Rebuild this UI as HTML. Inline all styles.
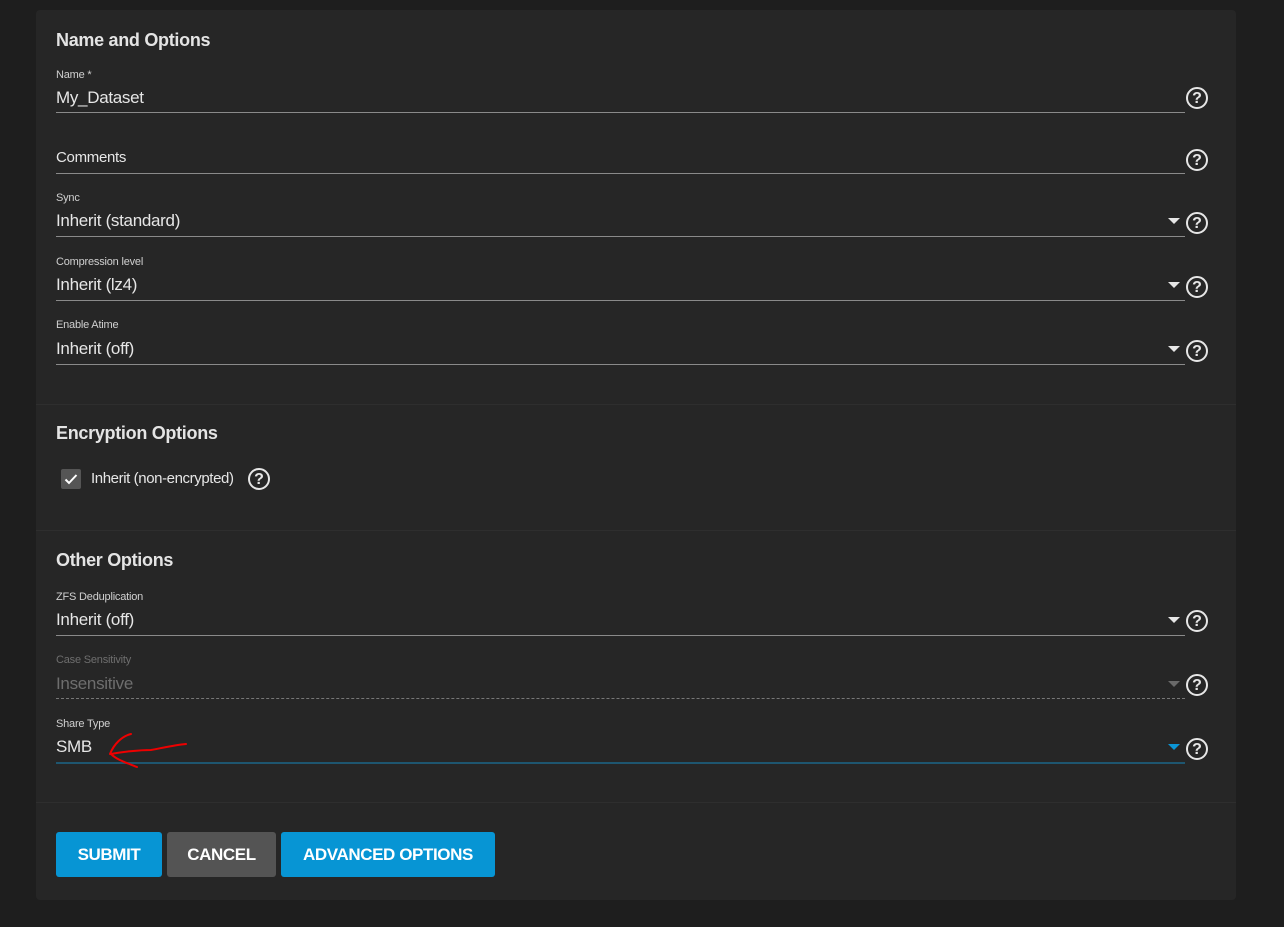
<!DOCTYPE html>
<html><head><meta charset="utf-8"><style>
*{margin:0;padding:0;box-sizing:border-box}
body{width:1284px;height:927px;background:#1e1e1e;font-family:"Liberation Sans",sans-serif;position:relative;overflow:hidden;color:#e6e6e6}
.card{position:absolute;left:36px;top:10px;width:1200px;height:890px;background:#262626;border-radius:4px}
.a{position:absolute}
h2{position:absolute;left:56px;font-size:18px;font-weight:bold;color:#e4e4e4;letter-spacing:-0.3px}
.lbl{position:absolute;left:56px;font-size:11px;color:#d0d0d0;letter-spacing:-0.2px}
.val{position:absolute;left:56px;font-size:17px;color:#e6e6e6;letter-spacing:-0.3px}
.line{position:absolute;left:56px;width:1129px;height:1px;background:#8a8a8a}
.div{position:absolute;left:36px;width:1200px;height:1px;background:#2e2e2e}
.help{position:absolute;width:22px;height:22px;border:2px solid #e6e6e6;border-radius:50%;font-size:16px;font-weight:bold;text-align:center;line-height:19px;color:#e6e6e6}
.arr{position:absolute;left:1168px;width:0;height:0;border-left:6px solid transparent;border-right:6px solid transparent;border-top:6px solid #e6e6e6}
.btn{position:absolute;top:832px;height:45px;border-radius:3px;color:#fff;font-weight:bold;font-size:17px;text-align:center;line-height:45px;letter-spacing:-0.4px}
</style></head><body>
<div class="card"></div>
<h2 style="top:30px">Name and Options</h2>
<div class="lbl" style="top:69px">Name *</div>
<div class="val" style="top:88px">My_Dataset</div>
<div class="line" style="top:112px"></div>
<div class="help" style="left:1186px;top:87px">?</div>

<div class="val" style="top:149px;font-size:15px">Comments</div>
<div class="line" style="top:173px"></div>
<div class="help" style="left:1186px;top:149px">?</div>

<div class="lbl" style="top:192px">Sync</div>
<div class="val" style="top:211px">Inherit (standard)</div>
<div class="line" style="top:236px"></div>
<div class="arr" style="top:218px"></div>
<div class="help" style="left:1186px;top:212px">?</div>

<div class="lbl" style="top:256px">Compression level</div>
<div class="val" style="top:275px">Inherit (lz4)</div>
<div class="line" style="top:300px"></div>
<div class="arr" style="top:282px"></div>
<div class="help" style="left:1186px;top:276px">?</div>

<div class="lbl" style="top:319px">Enable Atime</div>
<div class="val" style="top:339px">Inherit (off)</div>
<div class="line" style="top:364px"></div>
<div class="arr" style="top:346px"></div>
<div class="help" style="left:1186px;top:340px">?</div>

<div class="div" style="top:404px"></div>
<h2 style="top:423px">Encryption Options</h2>
<div class="a" style="left:61px;top:469px;width:20px;height:20px;background:#555;border-radius:2px"></div>
<svg class="a" style="left:61px;top:469px" width="20" height="20"><path d="M4.5 10.5l3.5 3.5 7.5-8" fill="none" stroke="#fff" stroke-width="2"/></svg>
<div class="a" style="left:91px;top:470px;font-size:15px;letter-spacing:-0.4px">Inherit (non-encrypted)</div>
<div class="help" style="left:248px;top:468px">?</div>

<div class="div" style="top:530px"></div>
<h2 style="top:550px">Other Options</h2>
<div class="lbl" style="top:591px">ZFS Deduplication</div>
<div class="val" style="top:610px">Inherit (off)</div>
<div class="line" style="top:635px"></div>
<div class="arr" style="top:617px"></div>
<div class="help" style="left:1186px;top:610px">?</div>

<div class="lbl" style="top:654px;color:#6e6e6e">Case Sensitivity</div>
<div class="val" style="top:674px;color:#6e6e6e">Insensitive</div>
<div class="line" style="top:698px;background:none;border-top:1px dashed #777"></div>
<div class="arr" style="top:681px;border-top-color:#6a6a6a"></div>
<div class="help" style="left:1186px;top:674px">?</div>

<div class="lbl" style="top:718px">Share Type</div>
<div class="val" style="top:737px">SMB</div>
<div class="line" style="top:762px;height:2px;background:#1e5670"></div>
<div class="arr" style="top:744px;border-top-color:#0b95d6"></div>
<div class="help" style="left:1186px;top:738px">?</div>
<svg class="a" style="left:100px;top:730px" width="100" height="40"><path d="M31 4C22 6 14 14 10 24M11 24C20 22 40 20 51 20C62 18 75 15 86 14M11 24C17 30 27 33 37 37" fill="none" stroke="#e00" stroke-width="2" stroke-linecap="round"/></svg>

<div class="div" style="top:802px"></div>
<div class="btn" style="left:56px;width:106px;background:#0795d4">SUBMIT</div>
<div class="btn" style="left:167px;width:109px;background:#545454">CANCEL</div>
<div class="btn" style="left:281px;width:214px;background:#0795d4">ADVANCED OPTIONS</div>
</body></html>
